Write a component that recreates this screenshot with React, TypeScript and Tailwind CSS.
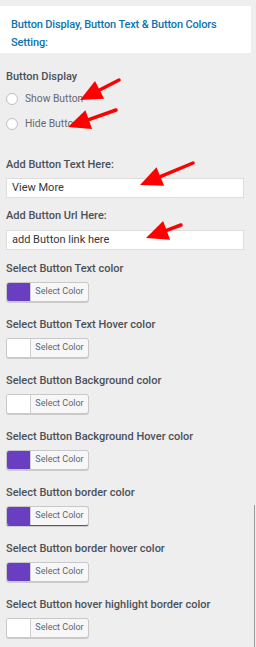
import React from "react";

const purple = "#6a3ec0";

const colorRows: { label: string; color: string | null; purpleBottom?: boolean }[] = [
  { label: "Select Button Text color", color: purple },
  { label: "Select Button Text Hover color", color: null },
  { label: "Select Button Background color", color: null },
  { label: "Select Button Background Hover color", color: purple },
  { label: "Select Button border color", color: purple, purpleBottom: true },
  { label: "Select Button border hover color", color: purple },
  { label: "Select Button hover highlight border color", color: null },
];

function Arrow({ x1, y1, x2, y2 }: { x1: number; y1: number; x2: number; y2: number }) {
  const dx = x2 - x1;
  const dy = y2 - y1;
  const len = Math.sqrt(dx * dx + dy * dy);
  const ux = dx / len;
  const uy = dy / len;
  const hl = 22;
  const hw = 10;
  const bx = x2 - ux * hl;
  const by = y2 - uy * hl;
  const pts = `${x2},${y2} ${bx - uy * hw},${by + ux * hw} ${bx + uy * hw},${by - ux * hw}`;
  return (
    <g>
      <line x1={x1} y1={y1} x2={bx} y2={by} stroke="#ff0000" strokeWidth={3.5} strokeLinecap="round" />
      <polygon points={pts} fill="#ff0000" />
    </g>
  );
}

function ColorButton({ color, purpleBottom }: { color: string | null; purpleBottom?: boolean }) {
  return (
    <div
      className={`flex h-[20px] w-[83px] overflow-hidden rounded-[3px] border border-[#c8c8c8] ${
        purpleBottom ? "border-b-[#6a3ec0]" : ""
      } bg-[#f7f7f7] shadow-[0_1px_0_#ccc]`}
    >
      <div className="w-[24px] border-r border-[#d0d0d0]" style={{ background: color ?? "#ffffff" }} />
      <div className="flex flex-1 items-center justify-center text-[9px] text-[#60656b]">Select Color</div>
    </div>
  );
}

export default function App() {
  return (
    <div className="relative h-[647px] w-[256px] overflow-hidden bg-[#eeeeee] font-['Roboto',sans-serif] text-[#4b5158]">
      <div className="mt-[6px] mr-[5px] h-[47px] bg-white px-[11px] pt-[10px] text-[11px] font-medium leading-[18px] tracking-[-0.15px] text-[#0f73ad]">
        Button Display, Button Text &amp; Button Colors Setting:
      </div>

      <div className="px-[6px]">
        <div className="mt-[16px] text-[11px] font-medium leading-[16px]">Button Display</div>
        <div className="mt-[6px] flex h-[16px] items-center gap-[7px]">
          <span className="h-[12px] w-[12px] rounded-full border border-[#bcc0c4] bg-white" />
          <span className="text-[10.3px] text-[#646970]">Show Button</span>
        </div>
        <div className="mt-[9px] flex h-[16px] items-center gap-[7px]">
          <span className="h-[12px] w-[12px] rounded-full border border-[#bcc0c4] bg-white" />
          <span className="text-[10.3px] text-[#646970]">Hide Button</span>
        </div>

        <div className="mt-[25px] text-[11px] font-medium leading-[16px]">Add Button Text Here:</div>
        <div className="mt-[5px] flex h-[20px] w-[238px] items-center border border-[#dddddd] bg-white px-[5px] text-[11px] text-[#32373c]">
          View More
        </div>
        <div className="mt-[10px] text-[11px] font-medium leading-[16px]">Add Button Url Here:</div>
        <div className="mt-[6px] flex h-[20px] w-[238px] items-center border border-[#dddddd] bg-white px-[5px] text-[11px] text-[#32373c]">
          add Button link here
        </div>

        <div className="mt-[11px] flex flex-col">
          {colorRows.map((r) => (
            <div key={r.label} className="mb-[15px]">
              <div className="text-[11px] font-medium leading-[16px]">{r.label}</div>
              <div className="mt-[5px]">
                <ColorButton color={r.color} purpleBottom={r.purpleBottom} />
              </div>
            </div>
          ))}
        </div>
      </div>

      <div className="absolute right-[1px] top-[505px] bottom-0 w-px bg-[#9a9a9a]" />

      <svg className="pointer-events-none absolute left-0 top-0" width={256} height={647}>
        <Arrow x1={119} y1={80} x2={80} y2={100} />
        <Arrow x1={116} y1={110} x2={68} y2={127} />
        <Arrow x1={193} y1={163} x2={140} y2={185} />
        <Arrow x1={181} y1={225} x2={146} y2={238} />
      </svg>
    </div>
  );
}
